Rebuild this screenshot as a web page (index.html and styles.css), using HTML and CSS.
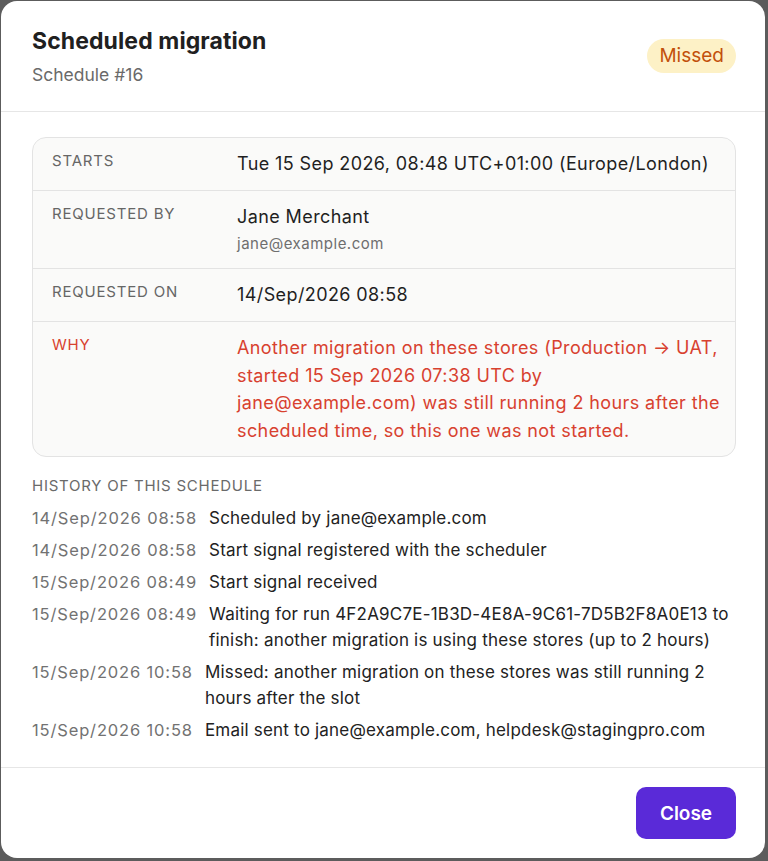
FILE: index.html
```html
<!DOCTYPE html>
<html lang="en">

<head>
    <meta charset="UTF-8">
    <meta name="viewport" content="width=device-width, initial-scale=1.0">
    <title>Scheduled migration</title>
    <link rel="stylesheet" href="styles.css">
</head>

<body>
    <div class="dialog">
        <!-- header with title and status pill -->
        <div class="dialog-head">
            <div>
                <h2 class="title">Scheduled migration</h2>
                <div class="subtitle">Schedule #16</div>
            </div>
            <span class="badge">Missed</span>
        </div>

        <div class="dialog-body">
            <div class="info-card">
                <div class="info-row">
                    <div class="label">Starts</div>
                    <div class="value">Tue 15 Sep 2026, 08:48 UTC+01:00 (Europe/London)</div>
                </div>
                <div class="info-row">
                    <div class="label">Requested by</div>
                    <div class="value">
                        Jane Merchant
                        <div class="email">jane@example.com</div>
                    </div>
                </div>
                <div class="info-row">
                    <div class="label">Requested on</div>
                    <div class="value">14/Sep/2026 08:58</div>
                </div>
                <div class="info-row why">
                    <div class="label">Why</div>
                    <div class="value">Another migration on these stores (Production → UAT, started 15 Sep 2026 07:38 UTC by jane@example.com) was still running 2 hours after the scheduled time, so this one was not started.</div>
                </div>
            </div>

            <h4 class="history-title">History of this schedule</h4>
            <ul class="history">
                <li><span class="when">14/Sep/2026 08:58</span><span class="what">Scheduled by jane@example.com</span></li>
                <li><span class="when">14/Sep/2026 08:58</span><span class="what">Start signal registered with the scheduler</span></li>
                <li><span class="when">15/Sep/2026 08:49</span><span class="what">Start signal received</span></li>
                <li><span class="when">15/Sep/2026 08:49</span><span class="what">Waiting for run 4F2A9C7E-1B3D-4E8A-9C61-7D5B2F8A0E13 to finish: another migration is using these stores (up to 2 hours)</span></li>
                <li><span class="when">15/Sep/2026 10:58</span><span class="what">Missed: another migration on these stores was still running 2 hours after the slot</span></li>
                <li><span class="when">15/Sep/2026 10:58</span><span class="what">Email sent to jane@example.com, helpdesk@stagingpro.com</span></li>
            </ul>
        </div>

        <div class="dialog-foot">
            <button class="btn-close">Close</button>
        </div>
    </div>
</body>

</html>
```

FILE: styles.css
```css
* {
    margin: 0;
    padding: 0;
    box-sizing: border-box;
}

html,
body {
    height: 100%;
}

body {
    background: #5c5c5c;
    padding: 1px 3px 3px 1px;
    font-family: Inter, "Noto Sans", sans-serif;
    color: #222;
}

.dialog {
    background: #fff;
    border-radius: 16px;
    height: 100%;
    display: flex;
    flex-direction: column;
    overflow: hidden;
}

.dialog-head {
    display: flex;
    align-items: center;
    justify-content: space-between;
    padding: 24px 29px 24px 31px;
    border-bottom: 1px solid #e6e6e6;
}

.title {
    font-size: 23px;
    line-height: 32px;
    font-weight: 700;
    letter-spacing: 0.1px;
    color: #202020;
}

.subtitle {
    margin-top: 6px;
    font-size: 17.5px;
    line-height: 24px;
    color: #6a6a6a;
}

.badge {
    background: #fdf1c6;
    color: #c2500c;
    font-size: 19px;
    line-height: 34px;
    padding: 0 12px;
    border-radius: 17px;
}

.dialog-body {
    flex: 1;
    padding: 25px 29px 24px 31px;
}

.info-card {
    background: #fafaf9;
    border: 1px solid #e3e3e3;
    border-radius: 14px;
}

.info-row {
    display: flex;
    padding: 12px 14px 12px 19px;
    border-top: 1px solid #e3e3e3;
}

.info-row:first-child {
    border-top: none;
}

.label {
    width: 185px;
    flex-shrink: 0;
    font-size: 15px;
    line-height: 22px;
    text-transform: uppercase;
    color: #666;
    letter-spacing: 0.8px;
}

.value {
    font-size: 18px;
    line-height: 28px;
    letter-spacing: 0.4px;
    color: #1f1f1f;
}

.email {
    margin-top: 1px;
    font-size: 15px;
    line-height: 24px;
    letter-spacing: 0.5px;
    color: #6e6e6e;
}

.why .label,
.why .value {
    color: #d8412f;
}

.why .value {
    line-height: 27.6px;
}

.history-title {
    margin-top: 20px;
    font-size: 15px;
    line-height: 18px;
    font-weight: 400;
    text-transform: uppercase;
    color: #6a6a6a;
    letter-spacing: 0.75px;
}

.history {
    list-style: none;
    margin-top: 10px;
    margin-right: -10px;
    display: flex;
    flex-direction: column;
    gap: 6px;
}

.history li {
    display: flex;
    gap: 12px;
    font-size: 17px;
    line-height: 26px;
}

.when {
    flex-shrink: 0;
    font-size: 16.5px;
    color: #727272;
    letter-spacing: 0.85px;
}

.what {
    color: #222;
    letter-spacing: 0.2px;
}

.dialog-foot {
    display: flex;
    justify-content: flex-end;
    padding: 19px 29px 20px 31px;
    border-top: 1px solid #e6e6e6;
}

.btn-close {
    background: #5a2ad8;
    color: #fff;
    border: none;
    border-radius: 10px;
    font-family: inherit;
    font-size: 19px;
    font-weight: 600;
    width: 100px;
    height: 52px;
}
```
